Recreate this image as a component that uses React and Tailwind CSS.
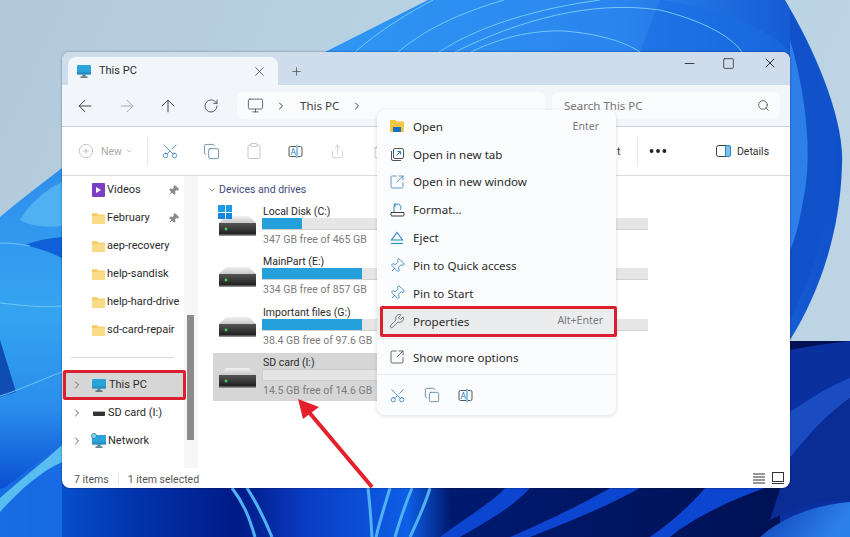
import {
  ArrowLeft, ArrowRight, ArrowUp, RotateCw, Monitor, ChevronRight, ChevronDown, Search, X, Plus, Minus, Square,
  Scissors, Copy, Clipboard, Share, Trash2, SquareArrowOutUpRight, Pin, Wrench, CirclePlus, Ellipsis,
} from 'lucide-react';

const noto = 'font-["Noto_Sans","Open_Sans",sans-serif]';
const roboto = 'font-["Roboto","Noto_Sans",sans-serif]';

function Wallpaper() {
  return (
    <svg className="absolute inset-0" width="850" height="537" viewBox="0 0 850 537">
      <defs>
        <linearGradient id="sky" x1="0" y1="0" x2="1" y2="0.3">
          <stop offset="0" stopColor="#b2c9da" />
          <stop offset="0.5" stopColor="#b9d3e5" />
          <stop offset="1" stopColor="#bcd4e3" />
        </linearGradient>
        <linearGradient id="swirl" x1="0" y1="0" x2="1" y2="0">
          <stop offset="0" stopColor="#2f98f3" />
          <stop offset="0.6" stopColor="#2a84ee" />
          <stop offset="1" stopColor="#0f4fcb" />
        </linearGradient>
        <linearGradient id="left" x1="0" y1="0" x2="0" y2="1">
          <stop offset="0" stopColor="#2f8eec" />
          <stop offset="0.45" stopColor="#35a4f0" />
          <stop offset="0.75" stopColor="#2a8dec" />
          <stop offset="1" stopColor="#0a4fd2" />
        </linearGradient>
        <linearGradient id="bottom" x1="0" y1="0" x2="1" y2="0">
          <stop offset="0" stopColor="#0b66e4" />
          <stop offset="0.16" stopColor="#0233ac" />
          <stop offset="0.28" stopColor="#001a86" />
          <stop offset="0.36" stopColor="#0a3cc4" />
          <stop offset="0.48" stopColor="#0e5ee6" />
          <stop offset="0.53" stopColor="#001a70" />
          <stop offset="1" stopColor="#00104f" />
        </linearGradient>
        <linearGradient id="corner" x1="0" y1="0" x2="1" y2="0.3">
          <stop offset="0" stopColor="#0d3fb4" />
          <stop offset="1" stopColor="#2d80ea" />
        </linearGradient>
        <linearGradient id="driveTop" x1="0" y1="0" x2="0" y2="1">
          <stop offset="0" stopColor="#f0f0f0" />
          <stop offset="1" stopColor="#bdbdbd" />
        </linearGradient>
        <linearGradient id="driveBody" x1="0" y1="0" x2="0" y2="1">
          <stop offset="0" stopColor="#555555" />
          <stop offset="1" stopColor="#1c1c1c" />
        </linearGradient>
      </defs>
      <rect width="850" height="537" fill="url(#sky)" />

      <path d="M325 52 L428 0 L785 0 C815 50 845 120 842 165 C840 240 815 300 790 340 L300 340 Z" fill="url(#swirl)" />
      <path d="M790 10 C825 70 838 130 832 180 C828 230 810 280 790 320 Z" fill="#1152cb" />
      <path d="M790 40 C805 90 812 150 805 190 C800 220 795 240 790 250 Z" fill="#2f7fe9" />
      <path d="M660 0 C730 10 770 30 790 52 L640 52 Z" fill="#1b6ce2" opacity="0.6" />
      <g fill="none" stroke="#74c9f6" strokeWidth="1">
        <path d="M355 52 C380 30 410 12 433 0" />
        <path d="M398 52 C430 25 470 10 504 0" />
        <path d="M439 52 C480 25 540 8 600 0" />
        <path d="M455 52 C520 20 590 0 660 10 C700 20 730 35 742 52" />
        <path d="M471 52 C500 38 530 30 564 31 C600 34 625 42 640 52" />
      </g>

      <path d="M0 341 L850 341 L850 537 L0 537 Z" fill="url(#bottom)" />
      <path d="M790 350 C810 346 830 343 850 341 L850 537 L780 537 L780 350 Z" fill="#0a2f9f" />
      <path d="M790 412 C810 398 830 386 850 378 L850 398 C830 412 810 432 790 458 Z" fill="#1a4bc0" />
      <path d="M790 458 C810 432 830 412 850 398 L850 500 C820 500 800 505 770 520 Z" fill="#0a2c95" />
      <path d="M760 537 C785 515 820 504 850 502 L850 537 Z" fill="url(#corner)" />
      <g fill="#0c45cf">
        <path d="M440 537 C470 515 495 500 505 488 L530 488 C510 510 480 525 460 537 Z" />
        <path d="M510 537 C550 520 590 500 610 488 L640 488 C600 510 560 525 530 537 Z" />
        <path d="M650 537 C675 520 695 500 705 488 L765 488 C730 500 690 520 670 537 Z" />
      </g>
      <g fill="none" stroke="#4fb2f2" strokeWidth="3">
        <path d="M232 488 C245 505 250 520 255 537" />
        <path d="M247 488 C258 505 265 520 272 537" />
        <path d="M368 488 C370 505 371 520 372 537" />
        <path d="M390 488 C385 505 380 520 376 537" />
        <path d="M412 488 C405 505 400 520 395 537" />
        <path d="M430 488 C425 505 418 520 410 537" />
      </g>

      <path d="M62 168 C40 185 20 200 0 217 L0 488 L62 488 Z" fill="url(#left)" />
      <path d="M0 537 L0 490 C20 478 40 458 62 445 L62 537 Z" fill="#1a6ee4" opacity="0.85" />
      <path d="M0 498 C20 480 40 465 62 445 L62 462 C40 472 20 490 0 512 Z" fill="#58bdf1" />
      <path d="M0 340 L16 392 L0 397 Z" fill="#0f4db4" />
      <path d="M20 220 C28 205 45 190 62 182 L62 226 C45 228 30 226 20 220 Z" fill="#4fb1f2" />
      <path d="M25 245 C38 240 50 238 62 237 L62 258 C50 252 38 248 25 245 Z" fill="#0f5fd8" />
      <g fill="none" stroke="#6fc6f5" strokeWidth="1">
        <path d="M0 303 C20 305 40 308 62 306" />
        <path d="M0 396 C20 390 40 380 62 372" />
        <path d="M0 243 C10 243 20 244 30 246" />
      </g>
    </svg>
  );
}

function Folder() {
  return (
    <svg className="w-[13px] h-[11px]" viewBox="0 0 13 11">
      <path d="M0 1 Q0 0 1 0 H5 L6.5 1.5 H12 Q13 1.5 13 2.5 V10 Q13 11 12 11 H1 Q0 11 0 10 Z" fill="#f6cf6e" />
      <path d="M0 3 H13 V10 Q13 11 12 11 H1 Q0 11 0 10 Z" fill="#fbdc86" />
    </svg>
  );
}

function PcIcon() {
  return (
    <svg className="w-[14px] h-[13px]" viewBox="0 0 14 13">
      <rect x="0" y="0" width="14" height="9.5" rx="1" fill="#2aa3d8" />
      <rect x="0" y="7" width="14" height="2.5" fill="#2a8fc4" />
      <rect x="5.5" y="9.5" width="3" height="2" fill="#4e7e94" />
      <rect x="3.5" y="11.5" width="7" height="1.2" fill="#33505f" />
    </svg>
  );
}

function RenameIcon() {
  return (
    <svg className="w-[15px] h-[15px]" viewBox="0 0 15 15" fill="none">
      <path d="M8 2.5 H2.5 Q1 2.5 1 4 V11 Q1 12.5 2.5 12.5 H8" stroke="#555" strokeWidth="1" />
      <path d="M10 2.5 H12.5 Q14 2.5 14 4 V11 Q14 12.5 12.5 12.5 H10" stroke="#555" strokeWidth="1" />
      <path d="M9 0.8 V14.2" stroke="#2b86c5" strokeWidth="1" />
      <text x="2.4" y="10.6" fontSize="8.5" fill="#2b86c5" fontFamily="Noto Sans">A</text>
    </svg>
  );
}

function DriveIcon({ windows }) {
  return (
    <div className="relative w-[37px] h-[20px] mt-[2px]">
      <svg className="w-[37px] h-[20px]" viewBox="0 0 37 20">
        <path d="M7 0 H30 L37 7 V9 H0 V7 Z" fill="url(#driveTop)" />
        <rect x="0" y="7" width="37" height="12" fill="url(#driveBody)" />
        <rect x="0" y="18.5" width="37" height="1.5" fill="#8c8c8c" />
        <circle cx="7" cy="13" r="1.4" fill="#46d160" />
      </svg>
      {windows && (
        <div className="absolute -left-[1px] -top-[11px] grid grid-cols-2 gap-[1px] w-[14px] h-[14px]">
          <span className="bg-[#1d9be6]" />
          <span className="bg-[#1d9be6]" />
          <span className="bg-[#1488d8]" />
          <span className="bg-[#1488d8]" />
        </div>
      )}
    </div>
  );
}

const quickItems = [
  { name: 'Videos', pin: true, video: true },
  { name: 'February', pin: true },
  { name: 'aep-recovery' },
  { name: 'help-sandisk' },
  { name: 'help-hard-drive' },
  { name: 'sd-card-repair' },
];

const drives = [
  { name: 'Local Disk (C:)', free: '347 GB free of 465 GB', used: 40, windows: true },
  { name: 'MainPart (E:)', free: '334 GB free of 857 GB', used: 100 },
  { name: 'Important files (G:)', free: '38.4 GB free of 97.6 GB', used: 100 },
];

function Sidebar() {
  return (
    <div className="w-[136px] flex shrink-0">
      <div className="w-[122px] flex flex-col text-[11px] text-[#2b2b2b]">
        {quickItems.map(item => (
          <div key={item.name} className="h-[28px] flex items-center pl-[30px] shrink-0">
            {item.video ? (
              <span className="w-[13px] h-[14px] bg-[#7a3fc4] rounded-[1px] flex items-center justify-center mr-[2px] shrink-0">
                <span className="w-0 h-0 border-y-[3px] border-y-transparent border-l-[5px] border-l-white" />
              </span>
            ) : (
              <span className="mr-[2px] shrink-0"><Folder /></span>
            )}
            <span className="whitespace-nowrap">{item.name}</span>
            {item.pin && <Pin size={11} className="ml-auto mr-[5px] text-[#8a8a8a] fill-[#8a8a8a] rotate-45" />}
          </div>
        ))}
        <div className="h-[1px] bg-[#d8d8d8] ml-[9px] mr-[10px] mt-[13px] mb-[13px] shrink-0" />
        <div className="relative h-[28px] flex items-center pl-[9px] bg-[#d6d6d6] shrink-0">
          <span className="absolute z-10 left-[1px] -right-[2px] -top-[1px] -bottom-[1px] border-[3px] border-[#dc1f2e] rounded-[2px]" />
          <ChevronRight size={12} className="text-[#666] mr-[9px]" />
          <PcIcon />
          <span className="ml-[3px]">This PC</span>
        </div>
        <div className="h-[28px] flex items-center pl-[9px] shrink-0">
          <ChevronRight size={12} className="text-[#666] mr-[10px]" />
          <span className="w-[12px] h-[5px] bg-[#333] rounded-[1px] border-t border-[#aaa]" />
          <span className="ml-[3px]">SD card (I:)</span>
        </div>
        <div className="h-[28px] flex items-center pl-[9px] shrink-0">
          <ChevronRight size={12} className="text-[#666] mr-[9px]" />
          <span className="relative flex">
            <PcIcon />
            <span className="absolute -left-[1px] -top-[2px] w-[6px] h-[6px] rounded-full bg-[#8fd3ee] border border-[#3d8fb8]" />
          </span>
          <span className="ml-[2px]">Network</span>
        </div>
      </div>
      <div className="w-[14px] bg-[#f6f6f6] relative">
        <div className="absolute left-[3px] top-[139px] w-[7px] h-[125px] bg-[#8b8b8b]" />
      </div>
    </div>
  );
}

function DriveTile({ drive }) {
  return (
    <div className="h-[48px] flex w-[435px] pl-[6px] items-center">
      <DriveIcon windows={drive.windows} />
      <div className="ml-[7px] flex-1 text-[10.5px] leading-[13px]">
        <div className="text-[#2b2b2b] h-[13px]">{drive.name}</div>
        <div className="h-[12px] bg-[#e6e6e6] -ml-[1px] border-b border-[#d0d0d0]">
          <div className="h-full bg-[#26a0da]" style={{ width: drive.used === 100 ? '100px' : '40px' }} />
        </div>
        <div className="text-[#7c7c7c] mt-[3px] whitespace-nowrap">{drive.free}</div>
      </div>
    </div>
  );
}

function Main() {
  return (
    <div className="flex-1 pl-[15px] pt-[6px] relative">
      <div className="flex items-center h-[15px] text-[10.5px] text-[#424b7e]">
        <ChevronDown size={10} className="text-[#666] -ml-[6px] mr-[2px]" />
        Devices and drives
      </div>
      <div className="mt-[4px] flex flex-col gap-[2.6px]">
        {drives.map(drive => <DriveTile key={drive.name} drive={drive} />)}
        <div className="h-[48px] flex w-[386px] pl-[6px] items-center bg-[#d6d6d6]">
          <DriveIcon />
          <div className="ml-[7px] flex-1 text-[10.5px] leading-[13px]">
            <div className="text-[#2b2b2b] h-[13px]">SD card (I:)</div>
            <div className="h-[12px] bg-[#e4e4e4] -ml-[1px] border border-[#cdcdcd]" />
            <div className="text-[#7c7c7c] mt-[3px] whitespace-nowrap">14.5 GB free of 14.6 GB</div>
          </div>
        </div>
      </div>
    </div>
  );
}

function NewTabIcon() {
  return (
    <svg className="w-[15px] h-[15px]" viewBox="0 0 15 15" fill="none" strokeWidth="1">
      <path d="M1.5 4 V12 Q1.5 13.5 3 13.5 H11" stroke="#555" />
      <rect x="3.5" y="1.5" width="10" height="10" rx="1.5" stroke="#555" />
      <path d="M6.5 8.5 L10.5 4.5 M7.5 4.5 H10.5 V7.5" stroke="#2b7cbc" />
    </svg>
  );
}

function ContextMenu() {
  const rows = [
    { label: 'Open', hint: 'Enter', icon: <svg className="w-[14px] h-[12px]" viewBox="0 0 14 12"><path d="M0 1 Q0 0 1 0 H5 L6.5 1.5 H13 Q14 1.5 14 2.5 V11 Q14 12 13 12 H1 Q0 12 0 11 Z" fill="#f5c443" /><rect x="3" y="7" width="8" height="5" fill="#1a6fc0" /></svg> },
    { label: 'Open in new tab', icon: <NewTabIcon /> },
    { label: 'Open in new window', icon: <SquareArrowOutUpRight size={16} strokeWidth={1.2} className="text-[#3d7fb8]" /> },
    { label: 'Format...', icon: <svg className="w-[15px] h-[15px]" viewBox="0 0 15 15" fill="none" stroke="#3b3b3b" strokeWidth="1"><path d="M1 10.5 H14 V13 Q14 14 13 14 H2 Q1 14 1 13 Z" /><path d="M4 10 V6 A3.5 3.5 0 1 1 10 8" stroke="#2b86c5" /><path d="M5.5 1 L3.8 3 L6 4.4" stroke="#2b86c5" /></svg> },
    { label: 'Eject', icon: <svg className="w-[14px] h-[14px]" viewBox="0 0 14 14" fill="none" stroke="#2b86c5" strokeWidth="1.1"><path d="M7 1.5 L12.5 9 H1.5 Z" /><path d="M1 12.5 H13" /></svg> },
    { label: 'Pin to Quick access', icon: <Pin size={16} strokeWidth={1.2} className="text-[#2b7cbc] rotate-45" /> },
    { label: 'Pin to Start', icon: <Pin size={16} strokeWidth={1.2} className="text-[#2b7cbc] rotate-45" /> },
  ];
  return (
    <div className={`absolute left-[377px] top-[110px] w-[239px] h-[305px] bg-[#fbfcfd] rounded-lg shadow-[0_1px_4px_rgba(0,0,0,0.14)] pt-[2.5px] text-[11.6px] text-[#2b2b2b] ${noto}`}>
      {rows.map(row => (
        <div key={row.label} className="h-[27.85px] flex items-center">
          <span className="w-[36px] flex justify-center shrink-0 pl-[4px]">{row.icon}</span>
          <span>{row.label}</span>
          {row.hint && <span className="ml-auto mr-[17px] text-[10.5px] text-[#7a7a7a]">{row.hint}</span>}
        </div>
      ))}
      <div className="relative h-[27.85px] flex items-center bg-[#ebecee]">
        <span className="absolute left-[3px] -right-[1px] top-[-1px] bottom-[-2px] border-[3px] border-[#dc1f2e] rounded-[2px]" />
        <span className="w-[36px] flex justify-center shrink-0 pl-[4px]"><Wrench size={16} strokeWidth={1.1} className="text-[#555]" /></span>
        <span>Properties</span>
        <span className="ml-auto mr-[13px] text-[10.5px] text-[#7a7a7a]">Alt+Enter</span>
      </div>
      <div className="h-[1px] bg-[#e9e9e9] mt-[3px]" />
      <div className="h-[35px] flex items-center pt-[1px]">
        <span className="w-[36px] flex justify-center shrink-0 pl-[4px]"><SquareArrowOutUpRight size={16} strokeWidth={1.2} className="text-[#444]" /></span>
        <span>Show more options</span>
      </div>
      <div className="h-[1px] bg-[#e9e9e9]" />
      <div className="flex items-center h-[40px] pl-[12px] gap-[18px]">
        <Scissors size={17} strokeWidth={1.1} className="text-[#2b7cbc] -rotate-90" />
        <Copy size={16} strokeWidth={1.1} className="text-[#3d6f96]" />
        <RenameIcon />
      </div>
    </div>
  );
}

function Arrow() {
  return (
    <svg className="absolute inset-0 pointer-events-none" width="850" height="537" viewBox="0 0 850 537">
      <path d="M372 487 L308 411" stroke="#e4202c" strokeWidth="4" />
      <path d="M298 399 L319 407 L303 419 Z" fill="#e4202c" />
    </svg>
  );
}

function ToolSlot({ children }) {
  return <span className="w-[42px] flex justify-center shrink-0">{children}</span>;
}

export default function App() {
  return (
    <div className={`relative w-[850px] h-[537px] overflow-hidden ${roboto}`}>
      <Wallpaper />
      <div className="absolute left-[62px] top-[52px] w-[728px] h-[436px] bg-white rounded-lg overflow-hidden shadow-[0_0_2px_rgba(0,0,0,0.5)] flex flex-col">
        {/* title bar */}
        <div className="h-[33px] bg-[#cfdceb] flex items-end shrink-0 relative">
          <div className="ml-[6px] w-[210px] h-[28px] bg-[#f2f6fb] rounded-t-lg flex items-center pl-[9px] pr-[11px] text-[11px] text-[#2b2b2b]">
            <PcIcon />
            <span className="ml-[8px] pt-[1px]">This PC</span>
            <X size={15} strokeWidth={1.3} className="ml-auto text-[#444]" />
          </div>
          <Plus size={13} strokeWidth={1.3} className="ml-[12px] mb-[7px] text-[#444]" />
          <div className="ml-auto flex items-center mr-[12px] self-start mt-[3px] text-[#333]">
            <Minus size={15} strokeWidth={1.5} />
            <Square size={13} strokeWidth={1.5} className="ml-[25px]" />
            <X size={16} strokeWidth={1.5} className="ml-[27px]" />
          </div>
        </div>
        {/* nav row */}
        <div className={`h-[42px] bg-[#f2f6fb] border-b border-[#ccd2d9] flex items-center shrink-0 text-[#444] ${noto}`}>
          <ArrowLeft size={20} strokeWidth={1.2} className="ml-[13px]" />
          <ArrowRight size={20} strokeWidth={1.2} className="ml-[22px] text-[#a8adb3]" />
          <ArrowUp size={20} strokeWidth={1.2} className="ml-[21px]" />
          <RotateCw size={16} strokeWidth={1.3} className="ml-[25px]" />
          <div className="ml-[18px] w-[308px] h-[27px] bg-[#f9fbfd] rounded-md flex items-center pl-[10px] text-[11.5px]">
            <Monitor size={17} strokeWidth={1.1} />
            <ChevronRight size={12} className="ml-[11px]" />
            <span className="ml-[13px]">This PC</span>
            <ChevronRight size={12} className="ml-[12px]" />
          </div>
          <div className="ml-[7px] w-[228px] h-[27px] bg-[#f9fbfd] rounded-md flex items-center pl-[12px] pr-[10px] text-[11.5px] text-[#777]">
            Search This PC
            <Search size={13} strokeWidth={1.4} className="ml-auto text-[#444]" />
          </div>
        </div>
        {/* command bar */}
        <div className="h-[49px] border-b border-[#d6d9dd] flex items-center shrink-0 text-[10.5px]">
          <CirclePlus size={16} strokeWidth={1} className="ml-[16px] text-[#aaa]" />
          <span className="ml-[7px] pt-[1px] text-[#aaa]">New</span>
          <ChevronDown size={8} className="ml-[3px] text-[#aaa]" />
          <span className="ml-[14px] w-[1px] h-[29px] bg-[#e6e6e6]" />
          <span className="ml-[1px]" />
          <ToolSlot><Scissors size={18} strokeWidth={1} className="text-[#2b7cbc] -rotate-90" /></ToolSlot>
          <ToolSlot><Copy size={17} strokeWidth={1} className="text-[#3d6f96]" /></ToolSlot>
          <ToolSlot><Clipboard size={18} strokeWidth={1} className="text-[#b5b5b5]" /></ToolSlot>
          <ToolSlot><RenameIcon /></ToolSlot>
          <ToolSlot><Share size={15} strokeWidth={1} className="text-[#b5b5b5]" /></ToolSlot>
          <ToolSlot><Trash2 size={15} strokeWidth={1} className="text-[#b5b5b5]" /></ToolSlot>
          <span className="ml-[216px] pt-[1px] text-[#333] w-[6px]">t</span>
          <span className="ml-[14px] w-[1px] h-[29px] bg-[#e6e6e6]" />
          <Ellipsis size={22} strokeWidth={2.2} className="ml-[9px] text-[#222]" />
          <svg className="ml-[47px] w-[15px] h-[12px]" viewBox="0 0 15 12" fill="none" stroke="#3b3b3b" strokeWidth="1"><rect x="0.5" y="0.5" width="14" height="11" rx="2" /><path d="M9.5 0.5 H12.5 Q14.5 0.5 14.5 2.5 V9.5 Q14.5 11.5 12.5 11.5 H9.5 Z" fill="#7dc2ea" stroke="#2b86c5" /></svg>
          <span className="ml-[6px] pt-[1px] text-[#333]">Details</span>
        </div>
        {/* body */}
        <div className="flex flex-1 min-h-0">
          <Sidebar />
          <Main />
        </div>
        {/* status */}
        <div className="h-[20px] flex items-center shrink-0 text-[10.5px] text-[#555] pl-[12px]">
          <span className="pt-[3px]">7 items</span>
          <span className="ml-[9px] w-[1px] h-[12px] bg-[#e6e6e6]" />
          <span className="ml-[9px] pt-[3px]">1 item selected</span>
          <svg className="ml-auto w-[12px] h-[11px]" viewBox="0 0 12 11" stroke="#333" strokeWidth="1"><path d="M0 1 H12 M0 4 H12 M0 7 H12 M0 10 H12" /></svg>
          <svg className="ml-[7px] mr-[6px] w-[12px] h-[12px]" viewBox="0 0 12 12" fill="none" stroke="#333" strokeWidth="1"><rect x="0.5" y="0.5" width="11" height="9" /><path d="M0 11.5 H12" /></svg>
        </div>
      </div>
      <ContextMenu />
      <Arrow />
    </div>
  );
}
